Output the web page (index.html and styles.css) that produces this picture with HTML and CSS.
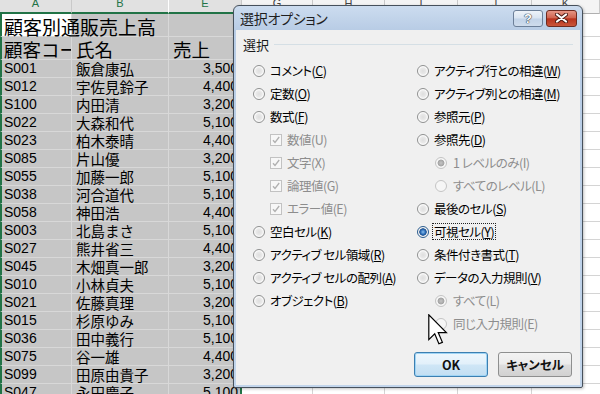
FILE: index.html
```html
<!DOCTYPE html>
<html lang="ja">
<head>
  <meta charset="UTF-8">
  <title>選択オプション</title>
  <link rel="stylesheet" href="styles.css">
</head>
<body>
  <div class="sheet">
    <div class="row head">
      <div class="c a sel">A</div><div class="c b sel">B</div><div class="c e sel">E</div>
      <div class="c g">G</div><div class="c h">H</div><div class="c i">I</div><div class="c j">J</div><div class="c k">K</div>
    </div>
    <div class="row r1">
      <div class="c a active"><span class="big over">顧客別通販売上高</span></div><div class="c b"></div><div class="c e"></div>
      <div class="c g"></div><div class="c h"></div><div class="c i"></div><div class="c j"></div><div class="c k"></div>
    </div>
    <div class="row r2">
      <div class="c a"><span class="big">顧客コード</span></div><div class="c b"><span class="big">氏名</span></div><div class="c e"><span class="big">売上</span></div>
      <div class="c g"></div><div class="c h"></div><div class="c i"></div><div class="c j"></div><div class="c k"></div>
    </div>
    <div class="row"><div class="c a">S001</div><div class="c b">飯倉康弘</div><div class="c e num">3,500</div><div class="c g"></div><div class="c h"></div><div class="c i"></div><div class="c j"></div><div class="c k"></div></div>
    <div class="row"><div class="c a">S012</div><div class="c b">宇佐見鈴子</div><div class="c e num">4,400</div><div class="c g"></div><div class="c h"></div><div class="c i"></div><div class="c j"></div><div class="c k"></div></div>
    <div class="row"><div class="c a">S100</div><div class="c b">内田清</div><div class="c e num">3,200</div><div class="c g"></div><div class="c h"></div><div class="c i"></div><div class="c j"></div><div class="c k"></div></div>
    <div class="row"><div class="c a">S022</div><div class="c b">大森和代</div><div class="c e num">5,100</div><div class="c g"></div><div class="c h"></div><div class="c i"></div><div class="c j"></div><div class="c k"></div></div>
    <div class="row"><div class="c a">S023</div><div class="c b">柏木泰晴</div><div class="c e num">4,400</div><div class="c g"></div><div class="c h"></div><div class="c i"></div><div class="c j"></div><div class="c k"></div></div>
    <div class="row"><div class="c a">S085</div><div class="c b">片山優</div><div class="c e num">3,200</div><div class="c g"></div><div class="c h"></div><div class="c i"></div><div class="c j"></div><div class="c k"></div></div>
    <div class="row"><div class="c a">S055</div><div class="c b">加藤一郎</div><div class="c e num">5,100</div><div class="c g"></div><div class="c h"></div><div class="c i"></div><div class="c j"></div><div class="c k"></div></div>
    <div class="row"><div class="c a">S038</div><div class="c b">河合道代</div><div class="c e num">5,100</div><div class="c g"></div><div class="c h"></div><div class="c i"></div><div class="c j"></div><div class="c k"></div></div>
    <div class="row"><div class="c a">S058</div><div class="c b">神田浩</div><div class="c e num">4,400</div><div class="c g"></div><div class="c h"></div><div class="c i"></div><div class="c j"></div><div class="c k"></div></div>
    <div class="row"><div class="c a">S003</div><div class="c b">北島まさ</div><div class="c e num">5,100</div><div class="c g"></div><div class="c h"></div><div class="c i"></div><div class="c j"></div><div class="c k"></div></div>
    <div class="row"><div class="c a">S027</div><div class="c b">熊井省三</div><div class="c e num">4,400</div><div class="c g"></div><div class="c h"></div><div class="c i"></div><div class="c j"></div><div class="c k"></div></div>
    <div class="row"><div class="c a">S045</div><div class="c b">木畑真一郎</div><div class="c e num">3,200</div><div class="c g"></div><div class="c h"></div><div class="c i"></div><div class="c j"></div><div class="c k"></div></div>
    <div class="row"><div class="c a">S010</div><div class="c b">小林貞夫</div><div class="c e num">5,100</div><div class="c g"></div><div class="c h"></div><div class="c i"></div><div class="c j"></div><div class="c k"></div></div>
    <div class="row"><div class="c a">S021</div><div class="c b">佐藤真理</div><div class="c e num">3,200</div><div class="c g"></div><div class="c h"></div><div class="c i"></div><div class="c j"></div><div class="c k"></div></div>
    <div class="row"><div class="c a">S015</div><div class="c b">杉原ゆみ</div><div class="c e num">5,100</div><div class="c g"></div><div class="c h"></div><div class="c i"></div><div class="c j"></div><div class="c k"></div></div>
    <div class="row"><div class="c a">S036</div><div class="c b">田中義行</div><div class="c e num">5,100</div><div class="c g"></div><div class="c h"></div><div class="c i"></div><div class="c j"></div><div class="c k"></div></div>
    <div class="row"><div class="c a">S075</div><div class="c b">谷一雄</div><div class="c e num">4,400</div><div class="c g"></div><div class="c h"></div><div class="c i"></div><div class="c j"></div><div class="c k"></div></div>
    <div class="row"><div class="c a">S099</div><div class="c b">田原由貴子</div><div class="c e num">3,200</div><div class="c g"></div><div class="c h"></div><div class="c i"></div><div class="c j"></div><div class="c k"></div></div>
    <div class="row"><div class="c a">S047</div><div class="c b">永田慶子</div><div class="c e num">5,100</div><div class="c g"></div><div class="c h"></div><div class="c i"></div><div class="c j"></div><div class="c k"></div></div>
  </div>

  <div class="dialog">
    <div class="titlebar">
      <span class="caption">選択オプション</span>
      <div class="tb-buttons">
        <div class="tb-btn help"><span>?</span></div>
        <div class="tb-btn close">
          <svg width="13" height="10" viewBox="0 0 13 10">
            <path d="M2 1.5 L11 8.5 M11 1.5 L2 8.5" stroke="#4a1a14" stroke-width="4" stroke-linecap="round"/>
            <path d="M2 1.5 L11 8.5 M11 1.5 L2 8.5" stroke="#fff" stroke-width="2.2" stroke-linecap="round"/>
          </svg>
        </div>
      </div>
    </div>
    <div class="client">
      <div class="group-head"><span>選択</span><i class="rule"></i></div>
      <div class="options">
        <div class="col left">
          <div class="opt"><span class="radio"></span><span>コメント(<u>C</u>)</span></div>
          <div class="opt"><span class="radio"></span><span>定数(<u>O</u>)</span></div>
          <div class="opt"><span class="radio"></span><span>数式(<u>F</u>)</span></div>
          <div class="opt sub dis-t"><span class="check"><svg width="10" height="10" viewBox="0 0 10 10"><path d="M2 5.2 L4 7.5 L8.2 2" fill="none" stroke="#b0b0b0" stroke-width="1.3"/></svg></span><span>数値(U)</span></div>
          <div class="opt sub dis-t"><span class="check"><svg width="10" height="10" viewBox="0 0 10 10"><path d="M2 5.2 L4 7.5 L8.2 2" fill="none" stroke="#b0b0b0" stroke-width="1.3"/></svg></span><span>文字(X)</span></div>
          <div class="opt sub dis-t"><span class="check"><svg width="10" height="10" viewBox="0 0 10 10"><path d="M2 5.2 L4 7.5 L8.2 2" fill="none" stroke="#b0b0b0" stroke-width="1.3"/></svg></span><span>論理値(G)</span></div>
          <div class="opt sub dis-t"><span class="check"><svg width="10" height="10" viewBox="0 0 10 10"><path d="M2 5.2 L4 7.5 L8.2 2" fill="none" stroke="#b0b0b0" stroke-width="1.3"/></svg></span><span>エラー値(E)</span></div>
          <div class="opt"><span class="radio"></span><span>空白セル(<u>K</u>)</span></div>
          <div class="opt"><span class="radio"></span><span>アクティブ セル領域(<u>R</u>)</span></div>
          <div class="opt"><span class="radio"></span><span>アクティブ セルの配列(<u>A</u>)</span></div>
          <div class="opt"><span class="radio"></span><span>オブジェクト(<u>B</u>)</span></div>
        </div>
        <div class="col right">
          <div class="opt"><span class="radio"></span><span>アクティブ行との相違(<u>W</u>)</span></div>
          <div class="opt"><span class="radio"></span><span>アクティブ列との相違(<u>M</u>)</span></div>
          <div class="opt"><span class="radio"></span><span>参照元(<u>P</u>)</span></div>
          <div class="opt"><span class="radio"></span><span>参照先(<u>D</u>)</span></div>
          <div class="opt sub2 dis-t"><span class="radio dis on"></span><span>1 レベルのみ(I)</span></div>
          <div class="opt sub2 dis-t"><span class="radio dis"></span><span>すべてのレベル(L)</span></div>
          <div class="opt"><span class="radio"></span><span>最後のセル(<u>S</u>)</span></div>
          <div class="opt"><span class="radio on"></span><span class="focus">可視セル(<u>Y</u>)</span></div>
          <div class="opt"><span class="radio"></span><span>条件付き書式(<u>T</u>)</span></div>
          <div class="opt"><span class="radio"></span><span>データの入力規則(<u>V</u>)</span></div>
          <div class="opt sub2 dis-t"><span class="radio dis on"></span><span>すべて(L)</span></div>
          <div class="opt sub2 dis-t"><span class="radio dis"></span><span>同じ入力規則(E)</span></div>
        </div>
      </div>
      <div class="actions">
        <div class="btn default">OK</div>
        <div class="btn">キャンセル</div>
      </div>
    </div>
  </div>

  <svg class="cursor" width="20" height="32" viewBox="0 0 12.5 20">
    <path d="M0.5 0.5 V16 L4.2 12.4 L6.8 18.6 L9 17.7 L6.4 11.6 H11.5 Z" fill="#fff" stroke="#000" stroke-width="0.75" stroke-linejoin="miter"/>
  </svg>
</body>
</html>
```

FILE: styles.css
```css
* {
  margin: 0;
  padding: 0;
  box-sizing: border-box;
}
body {
  width: 600px;
  height: 394px;
  overflow: hidden;
  background: #fff;
  font-family: "Liberation Sans", "Noto Sans CJK JP", sans-serif;
}

/* spreadsheet */
.sheet {
  width: 600px;
  height: 394px;
  overflow: hidden;
}
.row {
  display: flex;
  height: 18px;
}
.c {
  flex: none;
  height: 100%;
  border-right: 1px solid #d4d4d4;
  border-bottom: 1px solid #d4d4d4;
  white-space: nowrap;
  overflow: hidden;
  font-size: 14px;
  line-height: 17px;
  padding-left: 4px;
  color: #000;
}
.c.a { width: 72px; }
.c.b { width: 97px; font-family: "Noto Sans CJK JP", sans-serif; font-size: 14.5px; }
.c.e { width: 73px; }
.c.g { width: 71px; }
.c.h { width: 72px; }
.c.i { width: 73px; }
.c.j { width: 74px; }
.c.k { flex: 1; border-right: none; }

.row .a,
.row .b,
.row .e {
  background: #c6c6c6;
  border-color: #d8d8d8;
}
.row .a { border-left: 2px solid #217346; padding-left: 2px; }
.row .e { border-right: 2px solid #217346; }
.num {
  text-align: right;
  padding-right: 2px;
}

.head {
  height: 14px;
}
.head .c {
  height: 14px;
  background: #f4f4f4;
  border-right: 1px solid #c9c9c9;
  border-bottom: 1px solid #b0b0b0;
  border-left: none;
  padding: 0;
  font-family: "Liberation Sans", sans-serif;
  font-size: 11px;
  line-height: 7px;
  text-align: center;
  color: #444;
}
.head .sel {
  background: #e1e1e1;
  color: #217346;
  border-bottom: 2px solid #217346;
}
.head .b.sel { border-right: 1px solid #fff; }

.r1 { height: 23px; }
.r2 { height: 23px; }
.r1 .c,
.r2 .c {
  display: flex;
  align-items: flex-end;
}
.big {
  font-family: "Noto Sans CJK JP", sans-serif;
  font-size: 18.5px;
  line-height: 19px;
}
.r1 .big { font-size: 19px; }
.row .a.active {
  background: #fff;
  overflow: visible;
}
.over {
  position: relative;
  z-index: 1;
}

/* dialog */
.dialog {
  position: absolute;
  left: 233px;
  top: 5px;
  width: 350px;
  height: 383px;
  border: 1px solid #47515c;
  border-radius: 6px 6px 2px 2px;
  background: linear-gradient(#ccdcef, #b8cce5 24px, #c2d5eb);
  padding: 0 2px 2px;
  display: flex;
  flex-direction: column;
  font-family: "Noto Sans CJK JP", sans-serif;
  font-feature-settings: "palt";
  box-shadow: 1px 1px 3px rgba(0, 0, 0, 0.25);
}
.titlebar {
  height: 24px;
  display: flex;
  align-items: center;
  padding-left: 4px;
}
.caption {
  font-size: 14px;
  letter-spacing: -0.3px;
  color: #1e1e1e;
}
.tb-buttons {
  margin-left: auto;
  margin-right: 3px;
  display: flex;
  gap: 3px;
}
.tb-btn {
  height: 17px;
  border-radius: 3px;
  display: flex;
  align-items: center;
  justify-content: center;
}
.help {
  width: 30px;
  border: 1px solid #6c7f98;
  background: linear-gradient(#eef3f9, #d9e4f1 48%, #c2d3e8 52%, #cfdcec);
}
.help span {
  font: bold 13px "Liberation Sans", sans-serif;
  color: #fff;
  text-shadow: 0 0 1px #2c3a4c, 0 0 1px #2c3a4c, 0 0 1px #2c3a4c;
}
.close {
  width: 31px;
  border: 1px solid #6e2a20;
  background: linear-gradient(#e59585, #d0634f 46%, #b8321d 52%, #c9553a);
}

.client {
  flex: 1;
  background: #f0f0f0;
  display: flex;
  flex-direction: column;
  padding: 6px 7px 8px;
  font-size: 12.5px;
  color: #000;
}
.group-head {
  height: 16px;
  display: flex;
  align-items: center;
  gap: 5px;
  font-size: 13px;
  color: #1a1a1a;
}
.rule {
  flex: 1;
  height: 1px;
  background: #d5dfe5;
}
.options {
  display: flex;
  margin-top: 7px;
  padding-left: 10px;
}
.col.left { width: 164px; }
.opt {
  height: 23px;
  display: flex;
  align-items: center;
  gap: 5px;
  white-space: nowrap;
  line-height: 16px;
  letter-spacing: -0.5px;
}
.opt u { text-decoration: underline; text-underline-offset: 1px; }
.opt.sub { padding-left: 17px; }
.opt.sub2 { padding-left: 18px; gap: 6px; }
.dis-t { color: #8d8d8d; }

.radio {
  flex: none;
  width: 12px;
  height: 12px;
  border-radius: 50%;
  border: 1px solid #8f9090;
  background: radial-gradient(circle, #dedede 0, #e9e9e9 3px, #fbfbfb 4.5px);
}
.radio.on {
  border-color: #2c5d8f;
  background: radial-gradient(circle, #8cc0ee 0, #2b6cb6 2.4px, #1c4e8c 3.4px, #f4f4f4 4px);
}
.radio.dis {
  border-color: #c4c4c4;
  background: #f6f6f6;
}
.radio.dis.on {
  background: radial-gradient(circle, #c4c4c4 0, #a4a4a4 3px, #f6f6f6 3.8px);
}
.check {
  flex: none;
  width: 12px;
  height: 12px;
  border: 1px solid #c2c2c2;
  background: #f7f7f7;
  display: flex;
  align-items: center;
  justify-content: center;
}
.focus {
  display: inline-block;
  height: 15px;
  line-height: 15px;
  outline: 1px dotted #222;
  outline-offset: 0;
  padding: 0 1px;
  margin-left: -1px;
}

.actions {
  margin-top: auto;
  display: flex;
  justify-content: flex-end;
  gap: 10px;
  padding-right: 1px;
}
.btn {
  width: 74px;
  height: 25px;
  border: 1px solid #8e8f8f;
  border-radius: 3px;
  background: linear-gradient(#f3f3f3, #ebebeb 48%, #dddddd 52%, #d1d1d1);
  display: flex;
  align-items: center;
  justify-content: center;
  font-size: 12.5px;
  font-weight: bold;
  color: #111;
}
.btn.default {
  border-color: #3c7fb1;
  box-shadow: inset 0 0 0 1px #9fd4f5;
  background: linear-gradient(#eef7fd, #e2f0fa 48%, #cfe6f6 52%, #c2def2);
}

.cursor {
  position: absolute;
  left: 428px;
  top: 314px;
}
```
